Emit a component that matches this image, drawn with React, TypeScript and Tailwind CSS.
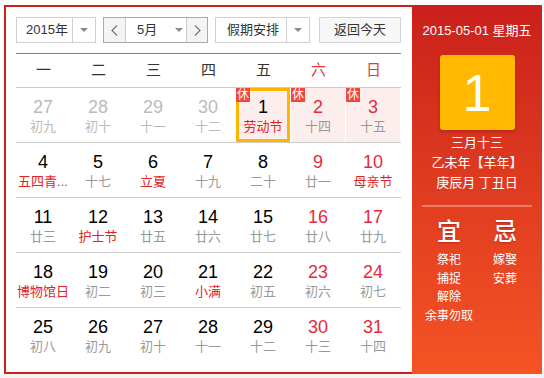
import React from "react";

type Cell = {
  d: number;
  l: string;
  prev?: boolean;
  fest?: boolean;
  weekend?: boolean;
  hol?: boolean;
  sel?: boolean;
};

const rows: Cell[][] = [
  [
    { d: 27, l: "初九", prev: true },
    { d: 28, l: "初十", prev: true },
    { d: 29, l: "十一", prev: true },
    { d: 30, l: "十二", prev: true },
    { d: 1, l: "劳动节", fest: true, hol: true, sel: true },
    { d: 2, l: "十四", weekend: true, hol: true },
    { d: 3, l: "十五", weekend: true, hol: true },
  ],
  [
    { d: 4, l: "五四青...", fest: true },
    { d: 5, l: "十七" },
    { d: 6, l: "立夏", fest: true },
    { d: 7, l: "十九" },
    { d: 8, l: "二十" },
    { d: 9, l: "廿一", weekend: true },
    { d: 10, l: "母亲节", weekend: true, fest: true },
  ],
  [
    { d: 11, l: "廿三" },
    { d: 12, l: "护士节", fest: true },
    { d: 13, l: "廿五" },
    { d: 14, l: "廿六" },
    { d: 15, l: "廿七" },
    { d: 16, l: "廿八", weekend: true },
    { d: 17, l: "廿九", weekend: true },
  ],
  [
    { d: 18, l: "博物馆日", fest: true },
    { d: 19, l: "初二" },
    { d: 20, l: "初三" },
    { d: 21, l: "小满", fest: true },
    { d: 22, l: "初五" },
    { d: 23, l: "初六", weekend: true },
    { d: 24, l: "初七", weekend: true },
  ],
  [
    { d: 25, l: "初八" },
    { d: 26, l: "初九" },
    { d: 27, l: "初十" },
    { d: 28, l: "十一" },
    { d: 29, l: "十二" },
    { d: 30, l: "十三", weekend: true },
    { d: 31, l: "十四", weekend: true },
  ],
];

const weekdays = ["一", "二", "三", "四", "五", "六", "日"];

function Tri() {
  return (
    <span className="block w-0 h-0 border-l-[4px] border-r-[4px] border-t-[4px] border-l-transparent border-r-transparent border-t-[#8a8a8a]" />
  );
}

function Chevron({ dir }: { dir: "l" | "r" }) {
  return (
    <svg width="7" height="11" viewBox="0 0 7 11">
      <polyline
        points={dir === "l" ? "6,0.5 1,5.5 6,10.5" : "1,0.5 6,5.5 1,10.5"}
        fill="none"
        stroke="#777"
        strokeWidth="1.2"
      />
    </svg>
  );
}

function DayCell({ c }: { c: Cell }) {
  const numColor = c.prev
    ? "text-[#bbbbbb]"
    : c.weekend
    ? "text-[#e62a3c]"
    : "text-black";
  const lunColor = c.prev
    ? "text-[#bbbbbb]"
    : c.fest
    ? "text-[#e2231f]"
    : "text-[#999999]";
  return (
    <div className="w-[55px] h-[54px] pr-[1px]">
      <div
        className={`relative h-full w-full flex flex-col items-center pt-[9px] ${
          c.hol ? "bg-[#fdeeee]" : ""
        }`}
      >
        <div className={`text-[18px] leading-[20px] ${numColor}`}>{c.d}</div>
        <div className={`text-[13px] leading-[20px] whitespace-nowrap ${lunColor}`}>
          {c.l}
        </div>
        {c.sel && (
          <div className="absolute inset-0 border-[3px] border-[#ffb400]" />
        )}
        {c.hol && (
          <div className="absolute top-0 left-0 w-[14px] h-[14px] bg-[#f2463a] text-white text-[12px] leading-[14px] text-center">
            休
          </div>
        )}
      </div>
    </div>
  );
}

export default function App() {
  return (
    <div className="w-[544px] h-[378px] bg-white pt-[5px] font-['Liberation_Sans','Noto_Sans_CJK_SC',sans-serif]">
      <div className="ml-[4px] flex w-[538px] h-[369px]">
        {/* Left */}
        <div className="w-[408px] h-full border-2 border-r-0 border-[#d0201c] pt-[10px] pl-[10px] pr-[11px]">
          {/* controls */}
          <div className="flex h-[26px] text-[13px] text-[#333]">
            <div className="w-[80px] flex border border-[#d0d0d0]">
              <div className="w-[55px] flex items-center pl-[9px]">2015年</div>
              <div className="flex-1 border-l border-[#d0d0d0] flex items-center justify-center">
                <Tri />
              </div>
            </div>
            <div className="ml-[7px] w-[105px] flex border border-[#aaaaaa]">
              <div className="w-[22px] bg-[#f4f4f4] border-r border-[#cccccc] flex items-center justify-center">
                <Chevron dir="l" />
              </div>
              <div className="w-[60px] flex items-center pl-[11px]">
                <span>5月</span>
                <span className="ml-[18px]">
                  <Tri />
                </span>
              </div>
              <div className="flex-1 bg-[#f4f4f4] border-l border-[#cccccc] flex items-center justify-center">
                <Chevron dir="r" />
              </div>
            </div>
            <div className="ml-[7px] w-[95px] flex border border-[#d0d0d0]">
              <div className="w-[70px] flex items-center pl-[11px]">假期安排</div>
              <div className="flex-1 border-l border-[#d0d0d0] flex items-center justify-center">
                <Tri />
              </div>
            </div>
            <div className="ml-[9px] w-[82px] flex items-center justify-center border border-[#d4d4d4] bg-[#f7f7f7]">
              返回今天
            </div>
          </div>
          <div className="mt-[10px] h-px bg-[#e8574a]" />
          {/* header */}
          <div className="flex h-[34px] border-b border-[#cccccc]">
            {weekdays.map((w, i) => (
              <div
                key={w}
                className={`w-[55px] flex items-center justify-center text-[15px] ${
                  i >= 5 ? "text-[#e4393c]" : "text-[#333]"
                }`}
              >
                {w}
              </div>
            ))}
          </div>
          {rows.map((r, ri) => (
            <div
              key={ri}
              className={`flex ${ri < 4 ? "border-b border-[#cccccc]" : ""}`}
            >
              {r.map((c, ci) => (
                <DayCell key={ci} c={c} />
              ))}
            </div>
          ))}
        </div>
        {/* Right */}
        <div className="w-[130px] h-full bg-linear-to-b from-[#ca1f1b] to-[#f55325] flex flex-col items-center pt-[16px] text-white">
          <div className="text-[13px] leading-[20px] whitespace-nowrap">2015-05-01 星期五</div>
          <div className="mt-[14px] w-[75px] h-[75px] rounded-[3px] bg-[#ffb900] shadow-[0_2px_3px_rgba(120,20,0,0.35)] flex items-center justify-center text-[52px] leading-none">
            1
          </div>
          <div className="mt-[3px] text-[13px] leading-[20px] text-center">
            <div>三月十三</div>
            <div>乙未年【羊年】</div>
            <div>庚辰月 丁丑日</div>
          </div>
          <div className="mt-[12px] w-[110px] h-[2px] bg-[#ee7a6a]" />
          <div className="mt-[11px] flex w-[112px]">
            <div className="w-[56px] flex flex-col items-center">
              <div className="text-[24px] leading-[28px] font-medium [text-shadow:0_1px_2px_rgba(120,0,0,0.4)]">宜</div>
              <div className="mt-[5px] text-[12px] leading-[18.5px] text-center whitespace-nowrap">
                <div>祭祀</div>
                <div>捕捉</div>
                <div>解除</div>
                <div>余事勿取</div>
              </div>
            </div>
            <div className="w-[56px] flex flex-col items-center">
              <div className="text-[24px] leading-[28px] font-medium [text-shadow:0_1px_2px_rgba(120,0,0,0.4)]">忌</div>
              <div className="mt-[5px] text-[12px] leading-[18.5px] text-center whitespace-nowrap">
                <div>嫁娶</div>
                <div>安葬</div>
              </div>
            </div>
          </div>
        </div>
      </div>
      <div className="h-[4px] bg-[#f4f4f4]" />
    </div>
  );
}
